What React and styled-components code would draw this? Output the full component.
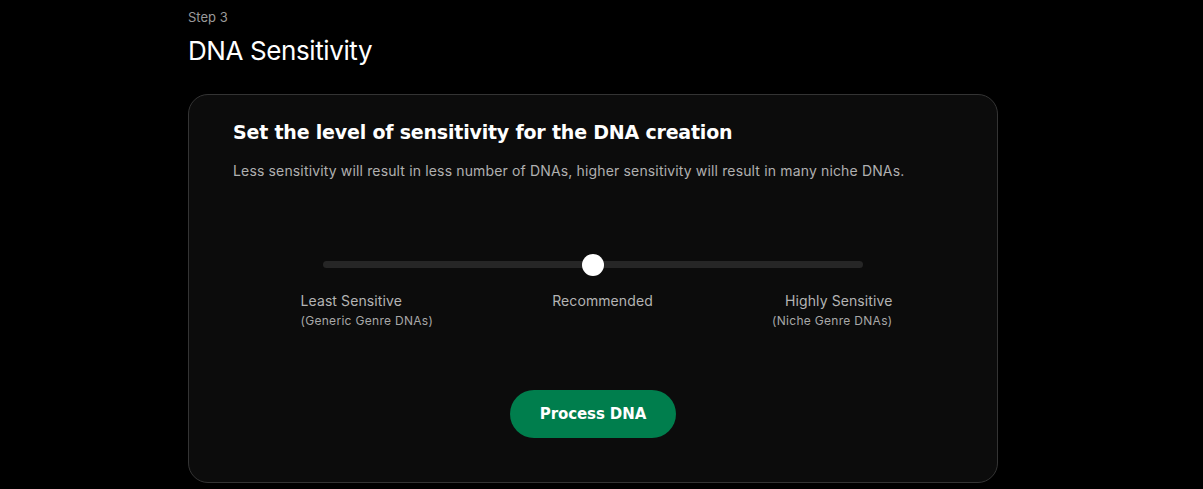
import React, { useState } from "react";
import styled, { createGlobalStyle } from "styled-components";

const GlobalStyle = createGlobalStyle`
  html, body {
    margin: 0;
    padding: 0;
    background: #000;
  }
  body {
    font-family: Inter, "Noto Sans", sans-serif;
    color: #fff;
  }
`;

const Page = styled.div`
  width: 810px;
  margin-left: 188px;
  padding-top: 9px;
  padding-bottom: 6px;
`;

const StepLabel = styled.div`
  font-size: 13px;
  color: #9a9a9a;
  line-height: 16px;
`;

const Title = styled.h1`
  margin: 10px 0 0;
  font-size: 26px;
  font-weight: 400;
  letter-spacing: -0.4px;
  line-height: 32px;
`;

const Card = styled.div`
  margin-top: 27px;
  background: #0c0c0c;
  border: 1px solid #343434;
  border-radius: 20px;
  padding: 24px 44px 44px;
`;

const CardHeading = styled.h2`
  margin: 0;
  font-family: "DejaVu Sans", Inter, sans-serif;
  font-size: 19px;
  font-weight: 700;
  letter-spacing: -0.2px;
  line-height: 26px;
`;

const Description = styled.p`
  margin: 16px 0 0;
  font-size: 14px;
  color: #b0b0b0;
  letter-spacing: 0.15px;
  line-height: 20px;
`;

const SliderArea = styled.div`
  margin-top: 80px;
  display: flex;
  flex-direction: column;
  align-items: center;
`;

const Track = styled.div`
  position: relative;
  width: 540px;
  height: 7px;
  border-radius: 4px;
  background: #262626;
  cursor: pointer;
`;

const Thumb = styled.div`
  position: absolute;
  top: 50%;
  width: 22px;
  height: 22px;
  border-radius: 50%;
  background: #fff;
  transform: translate(-50%, -50%);
`;

const Labels = styled.div`
  margin-top: 24px;
  width: 592px;
  margin-left: 7px;
  display: grid;
  grid-template-columns: 1fr 1fr 1fr;
`;

const LabelCol = styled.div`
  display: flex;
  flex-direction: column;
  align-items: ${(p) => p.$align};
  padding-left: ${(p) => (p.$align === "center" ? "12px" : "0")};
  text-align: ${(p) => (p.$align === "flex-end" ? "right" : p.$align === "center" ? "center" : "left")};
`;

const LabelMain = styled.span`
  font-size: 14px;
  color: #b4b4b4;
  letter-spacing: 0.1px;
  line-height: 18px;
`;

const LabelSub = styled.span`
  margin-top: 3px;
  font-size: 12px;
  color: #a8a8a8;
  letter-spacing: 0.3px;
  line-height: 16px;
`;

const Button = styled.button`
  margin-top: 61px;
  width: 166px;
  height: 48px;
  border: none;
  border-radius: 24px;
  background: #007e4d;
  color: #fff;
  font-family: "DejaVu Sans", Inter, sans-serif;
  font-size: 15px;
  font-weight: 700;
  letter-spacing: -0.1px;
  cursor: pointer;
`;

const labels = [
  { main: "Least Sensitive", sub: "(Generic Genre DNAs)", align: "flex-start" },
  { main: "Recommended", align: "center" },
  { main: "Highly Sensitive", sub: "(Niche Genre DNAs)", align: "flex-end" },
];

const App = () => {
  const [level] = useState(50);

  return (
    <>
      <GlobalStyle />
      <Page>
        <StepLabel>Step 3</StepLabel>
        <Title>DNA Sensitivity</Title>
        <Card>
          <CardHeading>Set the level of sensitivity for the DNA creation</CardHeading>
          <Description>
            Less sensitivity will result in less number of DNAs, higher sensitivity will result in many niche DNAs.
          </Description>
          <SliderArea>
            <Track>
              <Thumb style={{ left: `${level}%` }} />
            </Track>
            <Labels>
              {labels.map((l) => (
                <LabelCol key={l.main} $align={l.align}>
                  <LabelMain>{l.main}</LabelMain>
                  {l.sub && <LabelSub>{l.sub}</LabelSub>}
                </LabelCol>
              ))}
            </Labels>
            <Button>Process DNA</Button>
          </SliderArea>
        </Card>
      </Page>
    </>
  );
};

export default App;
